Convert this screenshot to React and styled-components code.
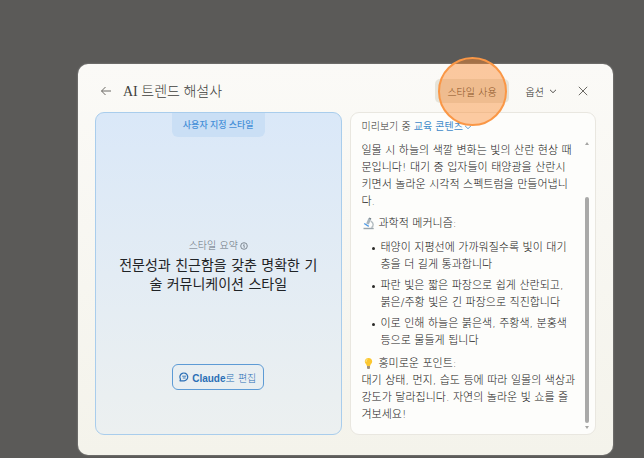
import React from "react";
import styled, { createGlobalStyle } from "styled-components";

const GlobalStyle = createGlobalStyle`
  * {
    box-sizing: border-box;
  }

  body {
    margin: 0;
    background: #5b5a58;
    color: #161514;
    font-family: "DejaVu Sans", "Noto Sans CJK KR", sans-serif;
    font-size: 11px;
    font-weight: 300;
    line-height: 17px;
  }

  button {
    margin: 0;
    font-family: inherit;
    font-weight: inherit;
    cursor: pointer;
  }
`;

const Page = styled.div`
  padding: 64px 31px 4px 78px;
`;

const Dialog = styled.main`
  padding: 14px 17px 20px;
  border-radius: 10px;
  background: linear-gradient(#fbfaf7, #f4f3eb);
  box-shadow: 0 0 2px rgba(255, 255, 255, 0.4);
`;

const Header = styled.header`
  display: flex;
  align-items: center;
  height: 26px;
  margin-bottom: 8px;
  padding: 0 8px 0 5px;
`;

const Title = styled.h1`
  flex: 1;
  margin: 0 0 0 11px;
  color: #403f3c;
  font-family: "Liberation Serif", "Noto Sans CJK KR", serif;
  font-size: 14px;
  font-weight: 300;
`;

const IconButton = styled.button`
  display: flex;
  padding: 0;
  border: 0;
  background: none;
  color: #6b6964;
`;

const UseWrap = styled.div`
  position: relative;
`;

const UseButton = styled.button`
  height: 24px;
  padding: 0 12px;
  border: 0;
  border-radius: 5px;
  background: #e6e4da;
  color: #1d1b18;
  font-size: 10px;
`;

const ClickMarker = styled.span`
  position: absolute;
  top: 50%;
  left: 50%;
  width: 69px;
  height: 69px;
  margin: -34px 0 0 -34px;
  border: 2px solid #fa9746;
  border-radius: 50%;
  background: rgba(250, 140, 50, 0.45);
  pointer-events: none;
`;

const OptionButton = styled.button`
  display: flex;
  align-items: center;
  gap: 5px;
  margin: 0 21px 0 17px;
  padding: 0;
  border: 0;
  background: none;
  color: #2c2a27;
  font-size: 10px;
`;

const Panels = styled.div`
  display: grid;
  grid-template-columns: 1fr 1fr;
  gap: 8px;
`;

const StylePanel = styled.section`
  display: flex;
  flex-direction: column;
  align-items: center;
  padding-bottom: 44px;
  border: 1px solid #a9cdec;
  border-radius: 9px;
  background: linear-gradient(#dae8f8, #ecf0f0);
`;

const Tag = styled.span`
  padding: 3px 11px 4px;
  border-radius: 0 0 6px 6px;
  background: #cadff5;
  color: #4690d8;
  font-family: Lato, "Noto Sans CJK KR", sans-serif;
  font-size: 9px;
  font-weight: 500;
`;

const Summary = styled.div`
  flex: 1;
  width: 100%;
  padding: 100px 20px 0;
  text-align: center;

  p {
    display: flex;
    align-items: center;
    justify-content: center;
    gap: 2px;
    margin: 0 0 2px;
    color: #68717b;
    font-size: 10px;
  }

  h2 {
    margin: 0;
    color: #1f2326;
    font-size: 14px;
    font-weight: 400;
    line-height: 19px;
  }
`;

const EditButton = styled.button`
  display: flex;
  align-items: center;
  gap: 3px;
  height: 26px;
  padding: 0 7px 0 6px;
  border: 1px solid #5d9bd5;
  border-radius: 6px;
  background: none;
  color: #2b6fb6;
  font-size: 10px;

  b {
    font-family: "Liberation Sans", sans-serif;
    font-weight: 700;
  }
`;

const PreviewPanel = styled.section`
  padding: 5px 5px 5px 11px;
  border: 1px solid #e9e7e0;
  border-radius: 9px;
  background: #fdfdfb;
`;

const PreviewHead = styled.div`
  display: flex;
  align-items: center;
  gap: 3px;
  margin-bottom: 7px;
  color: #2e2c2a;
  font-size: 10px;

  button {
    display: flex;
    align-items: center;
    gap: 1px;
    padding: 0;
    border: 0;
    background: none;
    color: #3f8ac9;
    font-size: 10px;
    font-weight: 400;
    line-height: 17px;
  }
`;

const PreviewBody = styled.div`
  display: flex;
`;

const Article = styled.article`
  flex: 1;
  padding: 0 8px 6px 0;

  p {
    margin: 0;
  }

  h3 {
    display: flex;
    align-items: center;
    gap: 4px;
    margin: 5px 0 0;
    font-size: 11px;
    font-weight: inherit;
  }

  ul {
    display: grid;
    gap: 4px;
    margin: 7px 0 6px;
    padding: 0;
    list-style: none;
  }

  li {
    display: flex;
  }

  li::before {
    content: "";
    flex: none;
    width: 3px;
    height: 3px;
    margin: 8px 6px 0 10px;
    border-radius: 50%;
    background: #2b2a28;
  }
`;

const ScrollTrack = styled.div`
  display: flex;
  flex-direction: column;
  align-items: center;
  width: 6px;
`;

const ScrollArrow = styled.span`
  border: 2px solid transparent;
  border-top: ${(props) => (props.$up ? "0" : "3px solid #a5a5a3")};
  border-bottom: ${(props) => (props.$up ? "3px solid #a5a5a3" : "0")};
`;

const ScrollThumb = styled.div`
  flex: 1;
  width: 4px;
  margin: 52px 0 3px;
  border-radius: 2px;
  background: #a9a9a8;
`;

function Chevron() {
  return (
    <svg width="8" height="8" viewBox="0 0 8 8" fill="none" stroke="currentColor">
      <path d="M1 2.8L4 5.7L7 2.8" strokeWidth="0.8" />
    </svg>
  );
}

function ArrowLeft() {
  return (
    <svg width="12" height="12" viewBox="0 0 12 12" fill="none" stroke="currentColor">
      <path d="M11 6H1.5M5.5 2L1.5 6L5.5 10" />
    </svg>
  );
}

function Close() {
  return (
    <svg width="10" height="10" viewBox="0 0 10 10" fill="none" stroke="currentColor">
      <path d="M0.8 0.8L9.2 9.2M9.2 0.8L0.8 9.2" />
    </svg>
  );
}

function Info() {
  return (
    <svg width="8" height="8" viewBox="0 0 8 8" fill="none" stroke="currentColor">
      <circle cx="4" cy="4" r="3.3" strokeWidth="0.8" />
      <path d="M3.2 3.6H4.2V5.8M4 1.9V2.8" strokeWidth="0.8" />
    </svg>
  );
}

function ChatIcon() {
  return (
    <svg width="10" height="10" viewBox="0 0 10 10" fill="none" stroke="currentColor">
      <path
        d="M1 8.8L1.5 7A3.9 3.9 0 1 1 5.2 8.8Z"
        strokeWidth="1.2"
        strokeLinejoin="round"
      />
      <path d="M3.2 4.2H7.2M3.8 6H6.6" strokeWidth="0.9" />
    </svg>
  );
}

function Microscope() {
  return (
    <svg width="13" height="13" viewBox="0 0 13 13">
      <path d="M6.5 1L9.2 2.3L6.8 7.6L4.2 6.4Z" fill="#a9b5bd" />
      <path d="M7.4 0.6L9.3 1.5L8.9 2.4L7 1.5Z" fill="#69777f" />
      <path d="M8.8 4.2C12 6 11.7 9.3 9.4 10.6" stroke="#b3bcc0" strokeWidth="1.4" fill="none" />
      <path d="M2.2 6.5L6.8 9.3" stroke="#4f9ae5" strokeWidth="1.4" />
      <path d="M1.5 12.2V10.8H11.7V12.2Z" fill="#9aa5ab" />
    </svg>
  );
}

function Bulb() {
  return (
    <svg width="13" height="13" viewBox="0 0 13 13">
      <path
        d="M6.5 1C4.2 1 2.8 2.6 2.8 4.6C2.8 6.6 4.6 7.2 4.9 9H8.1C8.4 7.2 10.2 6.6 10.2 4.6C10.2 2.6 8.8 1 6.5 1Z"
        fill="#fcc72f"
      />
      <path d="M5.4 2.2C4.4 2.7 4 3.6 4.1 4.7" stroke="#fff1a8" fill="none" />
      <path d="M5 9H8V11.2L7.3 12H5.7L5 11.2Z" fill="#a2927c" />
    </svg>
  );
}

const mechanisms = [
  "태양이 지평선에 가까워질수록 빛이 대기층을 더 길게 통과합니다",
  "파란 빛은 짧은 파장으로 쉽게 산란되고, 붉은/주황 빛은 긴 파장으로 직진합니다",
  "이로 인해 하늘은 붉은색, 주황색, 분홍색 등으로 물들게 됩니다",
];

function App() {
  return (
    <Page lang="ko">
      <GlobalStyle />
      <Dialog>
        <Header>
          <IconButton aria-label="뒤로">
            <ArrowLeft />
          </IconButton>
          <Title>AI 트렌드 해설사</Title>
          <UseWrap>
            <UseButton>스타일 사용</UseButton>
            <ClickMarker />
          </UseWrap>
          <OptionButton>
            옵션
            <Chevron />
          </OptionButton>
          <IconButton aria-label="닫기">
            <Close />
          </IconButton>
        </Header>
        <Panels>
          <StylePanel>
            <Tag>사용자 지정 스타일</Tag>
            <Summary>
              <p>
                스타일 요약
                <Info />
              </p>
              <h2>전문성과 친근함을 갖춘 명확한 기술 커뮤니케이션 스타일</h2>
            </Summary>
            <EditButton>
              <ChatIcon />
              <span>
                <b>Claude</b>로 편집
              </span>
            </EditButton>
          </StylePanel>
          <PreviewPanel>
            <PreviewHead>
              미리보기 중
              <button>
                교육 콘텐츠
                <Chevron />
              </button>
            </PreviewHead>
            <PreviewBody>
              <Article>
                <p>
                  일몰 시 하늘의 색깔 변화는 빛의 산란 현상 때문입니다! 대기 중
                  입자들이 태양광을 산란시
                  <br />
                  키면서 놀라운 시각적 스펙트럼을 만들어냅니다.
                </p>
                <h3>
                  <Microscope />
                  과학적 메커니즘:
                </h3>
                <ul>
                  {mechanisms.map((text) => (
                    <li key={text}>{text}</li>
                  ))}
                </ul>
                <h3>
                  <Bulb />
                  흥미로운 포인트:
                </h3>
                <p>
                  대기 상태, 먼지, 습도 등에 따라 일몰의 색상과 강도가
                  달라집니다. 자연의 놀라운 빛 쇼를 즐겨보세요!
                </p>
              </Article>
              <ScrollTrack>
                <ScrollArrow $up />
                <ScrollThumb />
                <ScrollArrow />
              </ScrollTrack>
            </PreviewBody>
          </PreviewPanel>
        </Panels>
      </Dialog>
    </Page>
  );
}

export default App;
